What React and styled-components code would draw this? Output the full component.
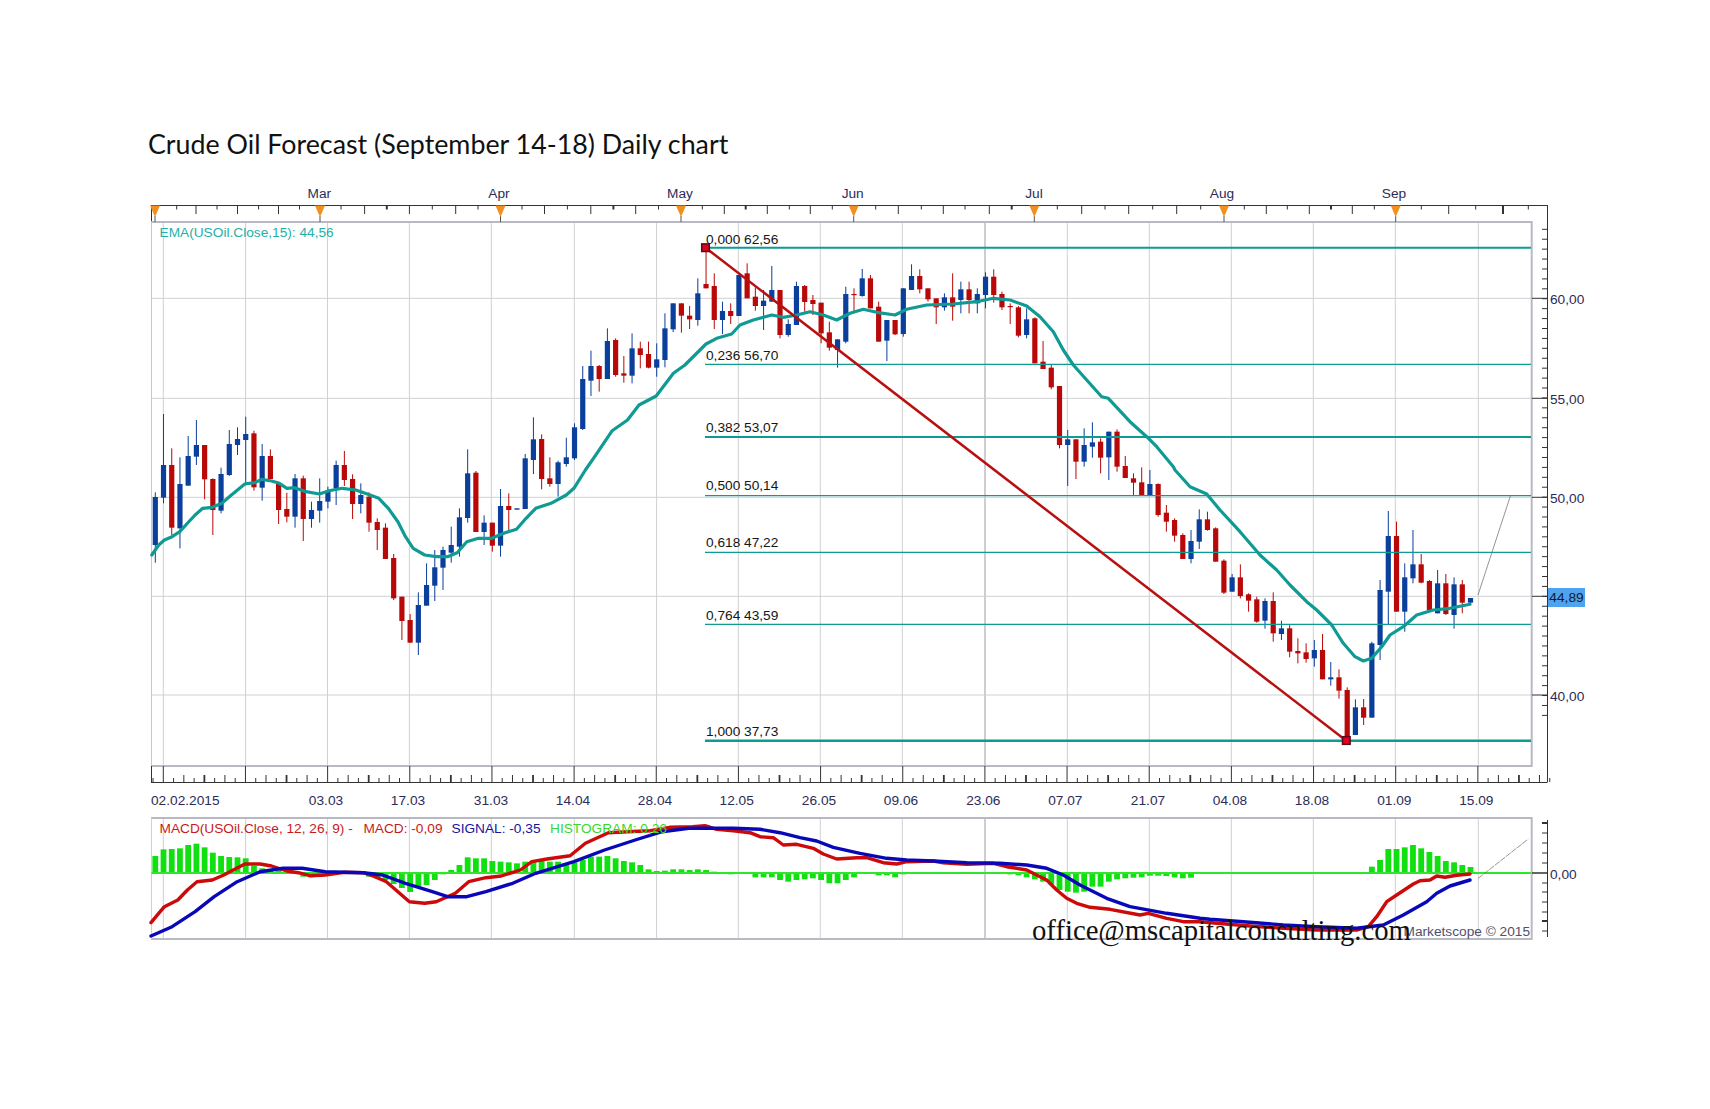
import React from 'react';
import styled, { createGlobalStyle } from 'styled-components';

const Global = createGlobalStyle`
  html, body { margin: 0; padding: 0; background: #fff; }
`;

const Page = styled.main`
  display: flex;
  flex-direction: column;
  width: 1710px;
  height: 1109px;
  padding-top: 129px;
  box-sizing: border-box;
  overflow: hidden;
  background: #fff;
`;
const Title = styled.h1`
  margin: 0 0 16px 148px;
  height: 30px;
  font: 400 26.8px/30px Lato, "Open Sans", sans-serif;
  color: #111;
  white-space: nowrap;
`;
const Figure = styled.figure`
  position: relative;
  display: flex;
  flex-direction: column;
  width: 1460px;
  margin: 0 0 0 140px;
`;
const Chart = styled.svg`
  display: block;
  width: 1460px;
  height: ${p => p.$h}px;
`;
const ChartLabel = styled.text`
  font-family: "Liberation Sans", Arial, sans-serif;
  font-size: 13.7px;
  fill: ${p => p.$c || '#2c2c58'};
  text-anchor: ${p => p.$anchor || 'start'};
  dominant-baseline: central;
`;
const Email = styled.div`
  position: absolute;
  left: 892px;
  top: 738px;
  font: 400 28.7px/34px "Liberation Serif", "Times New Roman", serif;
  color: #111;
  white-space: nowrap;
`;

const X = i => 155.3 + 8.22 * i;
const RED = '#b80808', BLUE = '#0a3f9c', TEAL = '#0f9a94';

const C = (base, rows) => rows.trim().split(/\s*\|\s*/).map(r => {
  const p = r.trim().split(/\s+/);
  return { red: p[0] === 'r', w1: base + +p[1] / 3, b1: base + +p[2] / 3, b2: base + +p[3] / 3, w2: base + +p[4] / 3 };
});

const candles = [
  ...C(400, `b 277 291 435 488|b 42 195 293 310|r 145 195 383 405|b 172 252 385 445|b 108 168 257 257|b 60 135 170 195|r 135 135 238 298|r 235 237 330 405|b 203 222 332 340|b 90 132 225 228|
  b 82 117 135 165|b 50 102 120 250|r 92 100 262 272|b 132 168 263 302|r 148 168 237 237|r 248 250 330 372|r 278 327 350 367|b 222 235 350 383|r 227 235 357 423|b 305 330 357 383|
  b 235 303 332 368|b 260 275 305 325|b 182 195 265 315|r 153 195 240 258|r 223 237 312 357|b 250 285 312 340|r 277 290 368 395|r 355 366 390 450|r 370 383 477 477|r 462 474 595 600|
  r 590 590 663 720|r 642 660 728 728|b 577 615 728 765|b 490 555 617 617|b 450 502 557 603|b 440 450 503 570|b 380 435 458 488|b 325 352 440 470|b 148 220 354 368|r 213 218 396 396|
  b 346 368 396 435|r 368 368 437 455|b 267 318 437 470|r 280 318 330 392|b 325 325 329 329|b 162 175 327 327|b 52 118 180 222|r 103 117 237 268|r 172 235 252 260|b 182 187 252 290|
  b 113 172 192 200|b 70 82 175 180|b -102 -63 87 90`),
  ...C(120, `b 692 738 782 828|r 735 738 777 815|b 625 663 777 777|r 655 660 765 770|r 708 760 767 788|b 640 685 767 790|r 665 685 705 745|r 665 702 743 745|b 670 718 743 770|
  b 580 625 720 742|b 550 550 628 636|r 550 550 587 638|r 558 587 598 627|b 475 520 600 617`),
  ...C(180, `r 203 312 325 325|r 280 318 420 447|b 365 393 420 462|r 370 393 408 432|b 285 285 408 408|r 250 280 355 355|r 322 350 378 392|b 330 362 378 450|b 258 330 365 365|r 330 330 465 475|
  b 418 432 465 470|b 305 318 435 435|r 315 318 366 395|r 345 360 372 405|r 368 368 460 490|r 425 457 503 512|b 478 478 510 563|b 320 342 485 490|r 325 342 345 395|b 267 295 348 350|
  r 285 295 385 385|r 365 380 485 485|b 420 420 482 543|r 420 420 463 465|b 325 325 462 470|b 253 288 330 330|r 268 288 328 340|r 325 325 358 365|r 355 355 382 432|b 340 352 382 392|
  r 280 352 380 422|b 305 328 360 400|r 305 328 360 400|b 325 342 370 400|b 277 290 345 385|r 268 290 345 368|r 335 342 382 390|r 370 378 381 432|r 378 382 467 472|b 385 418 465 475|
  r 412 415 550 550|r 483 545 567 567|r 555 563 622 628|r 618 618 795 805|b 750 778 795 918|r 778 778 845 897|b 745 795 845 860|b 727 787 800 833|r 775 785 833 880|b 755 755 832 900|
  r 748 755 860 875|r 828 858 894 894|r 880 895 908 945|r 862 907 945 945|b 870 912 945 945`),
  ...C(470, `r 40 42 135 140|r 105 128 155 185|r 145 150 197 215|r 190 195 267 267|b 180 213 267 280|b 118 148 215 237|r 125 148 180 182|r 172 175 275 275|r 268 272 368 372|b 312 322 365 365|
  r 283 322 378 385|r 370 373 392 425|r 380 388 455 458|b 385 393 452 476|r 367 393 490 515|b 452 475 492 510|r 465 475 545 562|r 505 543 550 580|r 520 547 567 578|b 510 540 565 590|
  r 492 540 628 628|b 576 622 628 647|r 598 622 662 686|r 652 660 800 820|b 688 712 795 795|r 687 712 743 765|b 515 520 743 743|b 330 360 525 570|b 123 198 365 465|r 155 198 425 425|
  b 280 322 425 485|b 180 283 325 340|r 252 283 338 340|r 330 333 420 425|b 300 340 430 430|r 312 340 432 435|b 322 343 435 476|r 330 343 398 430|b 384 384 398 400`),
];

const hist = [
  51,71,72,74,84,88,77,61,51,48, 47,44,21,14,9,7,4,1,-11,-13,
  -11,-6,-3,1,-1,-3,-11,-16,-21,-33, -45,-57,-41,-36,-21,-4,9,24,47,44,
  44,36,34,32,29,34,37,39,34,34, 29,32,39,49,49,51,44,36,32,24,
  11,6,7,11,11,9,11,9,4,1, -4,-3,-3,-13,-13,-13,-21,-26,-21,-19,
  -16,-21,-31,-31,-21,-13,-3,-3,-7,-7, -13,-4,-1,-1,-1,-1,-1,-1,-1,-1,
  -1,-1,-1,-1,-4,-7,-13,-19,-26,-34, -51,-56,-59,-56,-41,-41,-26,-19,-16,-14,
  -13,-8,-8,-9,-13,-16,-14,-3,-1,-1, 0,0,0,0,-3,0,-3,0,-3,0,
  0,0,0,0,0,-3,0,0,19,39, 72,72,77,84,74,63,51,36,32,24, 18,
];

const pts = (x0, sx, y0, list) => {
  const out = [];
  for (let i = 0; i < list.length; i += 2) out.push(`${(x0 + list[i] / sx).toFixed(1)},${(y0 + list[i + 1] / 3).toFixed(1)}`);
  return out.join(' ');
};
const Z = 2.613;

const ema = [
  pts(130, Z, 400, [57,465,75,435,90,420,110,410,130,395,150,370,170,345,190,325,215,322,240,310,265,285,300,252,325,248,345,238,370,243,390,250,410,265,430,263,460,275,495,282,520,272,555,265,590,270,620,282,650,295,675,325,700,365,720,410,740,445,770,465,800,470,830,470,855,458,880,425,910,415,945,415,980,398,1010,388,1035,355,1060,325,1100,310,1140,285,1160,265,1190,210,1220,160,1260,92,1300,60]),
  pts(130, Z, 120, [1330,855,1375,828,1420,760,1450,735,1505,672]),
  pts(700, 3, 180, [50,475,95,462,120,435,160,420,215,405,250,412,290,405,330,395,370,405,410,420,450,400,490,388,530,397,585,405,620,388,680,375,760,372,830,365,880,355,930,360,980,378,1020,410,1060,455,1090,510,1120,555,1160,600,1205,650,1225,655,1290,725,1340,770,1370,800,1420,860]),
  pts(1150, 3, 470, [75,0,120,50,170,72,210,120,270,185,330,255,380,300,420,345,470,395,500,420,545,465,580,520,615,560,640,573,665,565,695,530,720,495,760,470,800,435,850,420,900,415,960,403]),
].join(' ');

const macdRed = [
  pts(130, Z, 680, [55,728,75,700,90,680,125,660,150,630,175,605,215,600,245,585,270,570,300,552,340,552,370,558,410,573,440,578,470,587,510,585,560,577,610,578,640,590,670,605,700,635,730,665,770,670,800,665,850,640,885,605,930,593,970,588,1020,570,1050,545,1090,537,1150,527,1190,490,1250,458,1300,455,1360,452,1410,442,1470,440]),
  pts(700, 3, 770, [15,167,50,178,100,182,150,188,180,200,220,203,250,225,290,223,340,235,370,252,410,267,470,263,500,263,550,278,590,282,620,275,700,273,730,278,800,283,880,280,920,290,980,300,1040,330,1070,360,1100,385,1130,400,1170,412,1230,418,1320,435,1345,430,1400,445,1450,455,1500,455]),
  pts(1150, 3, 770, [200,460,300,468,400,475,500,480,620,480,655,470,680,440,710,395,740,375,790,342,810,332,840,330,860,318,885,322,920,316,960,312]),
].join(' ');

const macdBlue = [
  pts(130, Z, 680, [55,768,110,740,170,695,220,650,280,605,340,575,400,565,450,565,510,575,610,578,660,585,720,610,790,635,830,650,880,650,930,635,1000,610,1060,580,1160,545,1240,510,1320,480,1390,455,1460,445]),
  pts(700, 3, 770, [0,175,100,175,180,178,240,188,300,203,350,213,400,232,480,250,560,265,620,270,700,273,800,278,900,280,980,285,1040,295,1090,315,1140,345,1220,385,1290,410,1400,430,1500,445]),
  pts(1150, 3, 770, [180,448,280,455,400,465,500,470,620,475,700,465,760,435,830,395,860,370,900,348,960,330]),
].join(' ');

const gridX = [163.3,245.6,327.5,409.4,491.3,574.3,656.6,738.3,820.3,902.3,985,1067.3,1149.3,1231.3,1313.3,1395.3,1478.3];
const gridY = [298.3,398.3,497.3,596.3,695];
const fibs = [
  ['0,000 62,56', 247.7, 239, 2],
  ['0,236 56,70', 364.3, 355, 1.2],
  ['0,382 53,07', 437, 427, 2],
  ['0,500 50,14', 495.7, 485.7, 1.2],
  ['0,618 47,22', 552.3, 542.7, 1.2],
  ['0,764 43,59', 624.3, 615, 1.2],
  ['1,000 37,73', 740.7, 731.7, 2.6],
];
const months = [['Mar',319.4],['Apr',499],['May',680],['Jun',852.7],['Jul',1034],['Aug',1222],['Sep',1394]];
const flags = [155,320,500.5,681,853.7,1034.3,1224,1395.7];
const dates = [['03.03',326],['17.03',408],['31.03',491],['14.04',573],['28.04',655],['12.05',736.7],['26.05',819],['09.06',901],['23.06',983.3],['07.07',1065.3],['21.07',1148],['04.08',1230],['18.08',1312],['01.09',1394.3],['15.09',1476.3]];
const topTicks = [176.7,196,217,237.5,258.6,278.5,299.5,320,341,364.6,386.8,409.4,432.3,455.7,478,500.4,522,544.5,567.4,590.8,613.4,635.7,658.5,681,702.3,724.3,745.7,767.3,789.3,810.3,832.3,853.7,875.7,898.3,921.3,943.3,965,989.3,1011.7,1034.3,1057.3,1081.7,1105,1128.7,1152.7,1176.7,1200.7,1224,1244.3,1266.3,1287.3,1309.3,1331,1352.3,1374.3,1395.7,1421.3,1448.7,1475.7,1503,1528.3];
const thickTop = new Set([386.8,613.4,745.7,1011.7,1331,1503]);
const rightTicks = Array.from({ length: 50 }, (_, k) => 229.3 + k * 9.92);

const Marker = ({ x, y }) => <rect x={x - 3.8} y={y - 3.8} width="7.6" height="7.6" fill="#e00020" stroke="#5a0a1a" strokeWidth="1.5" />;

export default function App() {
  return (
    <Page>
      <Global />
      <Title>Crude Oil Forecast (September 14-18) Daily chart</Title>
      <Figure>
        <Chart $h={637} viewBox="140 175 1460 637" role="img" aria-label="Daily candlestick chart">
          {months.map(([t, x]) => <ChartLabel key={t} x={x} y={193.5} $anchor="middle">{t}</ChartLabel>)}

          <line x1="151" y1="205.5" x2="1547.5" y2="205.5" stroke="#333" />
          <line x1="151.5" y1="205" x2="151.5" y2="222" stroke="#333" />
          {topTicks.map((x, k) => (
            <line key={x} x1={x} x2={x} y1="205.5" y2={k % 2 ? 214 : 209.5} stroke="#333" strokeWidth={thickTop.has(x) ? 2 : 1} />
          ))}

          {gridX.map(x => <line key={x} x1={x} x2={x} y1="222" y2="766" stroke={x === 985 ? '#cdcdd2' : '#d0d0d3'} strokeWidth={x === 985 ? 2 : 1} />)}
          {gridY.map(y => <line key={y} x1="151.5" x2="1531" y1={y} y2={y} stroke="#d0d0d3" />)}
          <line x1="151.5" x2="151.5" y1="222" y2="766" stroke="#c6c6ce" />
          <path d="M151 222H1531.7V766H151" fill="none" stroke="#b9b9c4" strokeWidth="2" />

          {flags.map(x => (
            <g key={x}>
              <line x1={x} x2={x} y1="216" y2="222" stroke="#555" />
              <polygon points={`${x - 5},205.5 ${x + 5},205.5 ${x},217`} fill="#f0901e" />
            </g>
          ))}

          {candles.map((c, i) => (
            <g key={i} fill={c.red ? RED : BLUE} stroke="none">
              <rect x={X(i) - 0.5} y={c.w1} width="1" height={c.w2 - c.w1} />
              <rect x={X(i) - 2.6} y={c.b1} width="5.2" height={Math.max(c.b2 - c.b1, 1.2)} />
            </g>
          ))}

          {fibs.map(([t, y, ly, w]) => (
            <g key={t}>
              <line x1="705" x2="1531" y1={y} y2={y} stroke={TEAL} strokeWidth={w} />
              <ChartLabel x={706} y={ly} $c="#161616">{t}</ChartLabel>
            </g>
          ))}

          <polyline points={ema} fill="none" stroke={TEAL} strokeWidth="3.2" strokeLinejoin="round" strokeLinecap="round" />
          <line x1="705.5" y1="247.7" x2="1346" y2="740.5" stroke="#b81010" strokeWidth="2.5" />
          <Marker x={705.5} y={247.7} />
          <Marker x={1346.3} y={740.5} />
          <line x1="1478" y1="595" x2="1510.7" y2="495" stroke="#666" strokeWidth="0.7" />

          <line x1="1547.5" y1="205" x2="1547.5" y2="782" stroke="#333" />
          {rightTicks.map(y => <line key={y} x1="1542" x2="1547.5" y1={y} y2={y} stroke="#333" />)}
          {gridY.map(y => <line key={y} x1="1532" x2="1547.5" y1={y} y2={y} stroke="#333" />)}
          <ChartLabel x={1550} y={299.3}>60,00</ChartLabel>
          <ChartLabel x={1550} y={399.3}>55,00</ChartLabel>
          <ChartLabel x={1550} y={498.3}>50,00</ChartLabel>
          <ChartLabel x={1550} y={696.7}>40,00</ChartLabel>
          <rect x="1548" y="588" width="37" height="19" fill="#4fa3ee" />
          <ChartLabel x={1566.5} y={597.8} $anchor="middle" $c="#0e1a2c">44,89</ChartLabel>

          <ChartLabel x={159.5} y={232.3} $c="#1eb0aa">EMA(USOil.Close,15): 44,56</ChartLabel>

          <line x1="151" y1="782.5" x2="1547.5" y2="782.5" stroke="#333" />
          <line x1="151.5" y1="766" x2="151.5" y2="782" stroke="#333" />
          {Array.from({ length: 137 }, (_, k) => k - 1).map(k => {
            const x = 163.3 + k * 10.27;
            const major = k >= 0 && k % 8 === 0;
            return <line key={k} x1={x} x2={x} y1={major ? 766 : (k & 1) ? 778 : 775} y2="782" stroke="#333" strokeWidth={k >= 0 && k % 8 === 4 ? 1.8 : 1} />;
          })}
          <ChartLabel x={151} y={800}>02.02.2015</ChartLabel>
          {dates.map(([t, x]) => <ChartLabel key={t} x={x} y={800} $anchor="middle">{t}</ChartLabel>)}
        </Chart>

        <Chart $h={140} viewBox="140 812 1460 140" role="img" aria-label="MACD indicator">
          {gridX.map(x => <line key={x} x1={x} x2={x} y1="819" y2="938" stroke={x === 985 ? '#cdcdd2' : '#d0d0d3'} strokeWidth={x === 985 ? 2 : 1} />)}
          <path d="M151 818H1531.7V939H151" fill="none" stroke="#b9b9c4" strokeWidth="2" />
          <line x1="151.5" x2="151.5" y1="818" y2="939" stroke="#d0d0d3" />

          {hist.map((h, i) => h !== 0 && (
            <rect key={i} x={X(i) - 2.9} width="5.8" y={h > 0 ? 873 - h / 3 : 873} height={Math.abs(h) / 3} fill="#10e010" />
          ))}
          <line x1="151.5" x2="1531" y1="873" y2="873" stroke="#2fe62a" strokeWidth="2.2" />

          <polyline points={macdRed} fill="none" stroke="#cc0a0a" strokeWidth="3.4" strokeLinejoin="round" strokeLinecap="round" />
          <polyline points={macdBlue} fill="none" stroke="#0808b8" strokeWidth="3.4" strokeLinejoin="round" strokeLinecap="round" />
          <line x1="1478.3" y1="878.3" x2="1528.3" y2="839" stroke="#666" strokeWidth="0.7" strokeDasharray="6 1" />

          <line x1="1547.5" y1="820" x2="1547.5" y2="937" stroke="#333" />
          {[823,833,843,853,863,883,892,902,912,921,931].map(y => <line key={y} x1="1542" x2="1547.5" y1={y} y2={y} stroke="#333" strokeWidth={y === 823 || y === 921 ? 2 : 1} />)}
          <line x1="1532" x2="1547.5" y1="873" y2="873" stroke="#333" strokeWidth="1.5" />
          <ChartLabel x={1550} y={874}>0,00</ChartLabel>

          <ChartLabel x={159.5} y={828.5} $c="#c81a1a">MACD(USOil.Close, 12, 26, 9) -</ChartLabel>
          <ChartLabel x={363.4} y={828.5} $c="#c81a1a">MACD: -0,09</ChartLabel>
          <ChartLabel x={451.5} y={828.5} $c="#15159a">SIGNAL: -0,35</ChartLabel>
          <ChartLabel x={550} y={828.5} $c="#38d82a">HISTOGRAM: 0,26</ChartLabel>
          <ChartLabel x={1530} y={931} $anchor="end" $c="#50506c">Marketscope © 2015</ChartLabel>
        </Chart>
        <Email>office@mscapitalconsulting.com</Email>
      </Figure>
    </Page>
  );
}
